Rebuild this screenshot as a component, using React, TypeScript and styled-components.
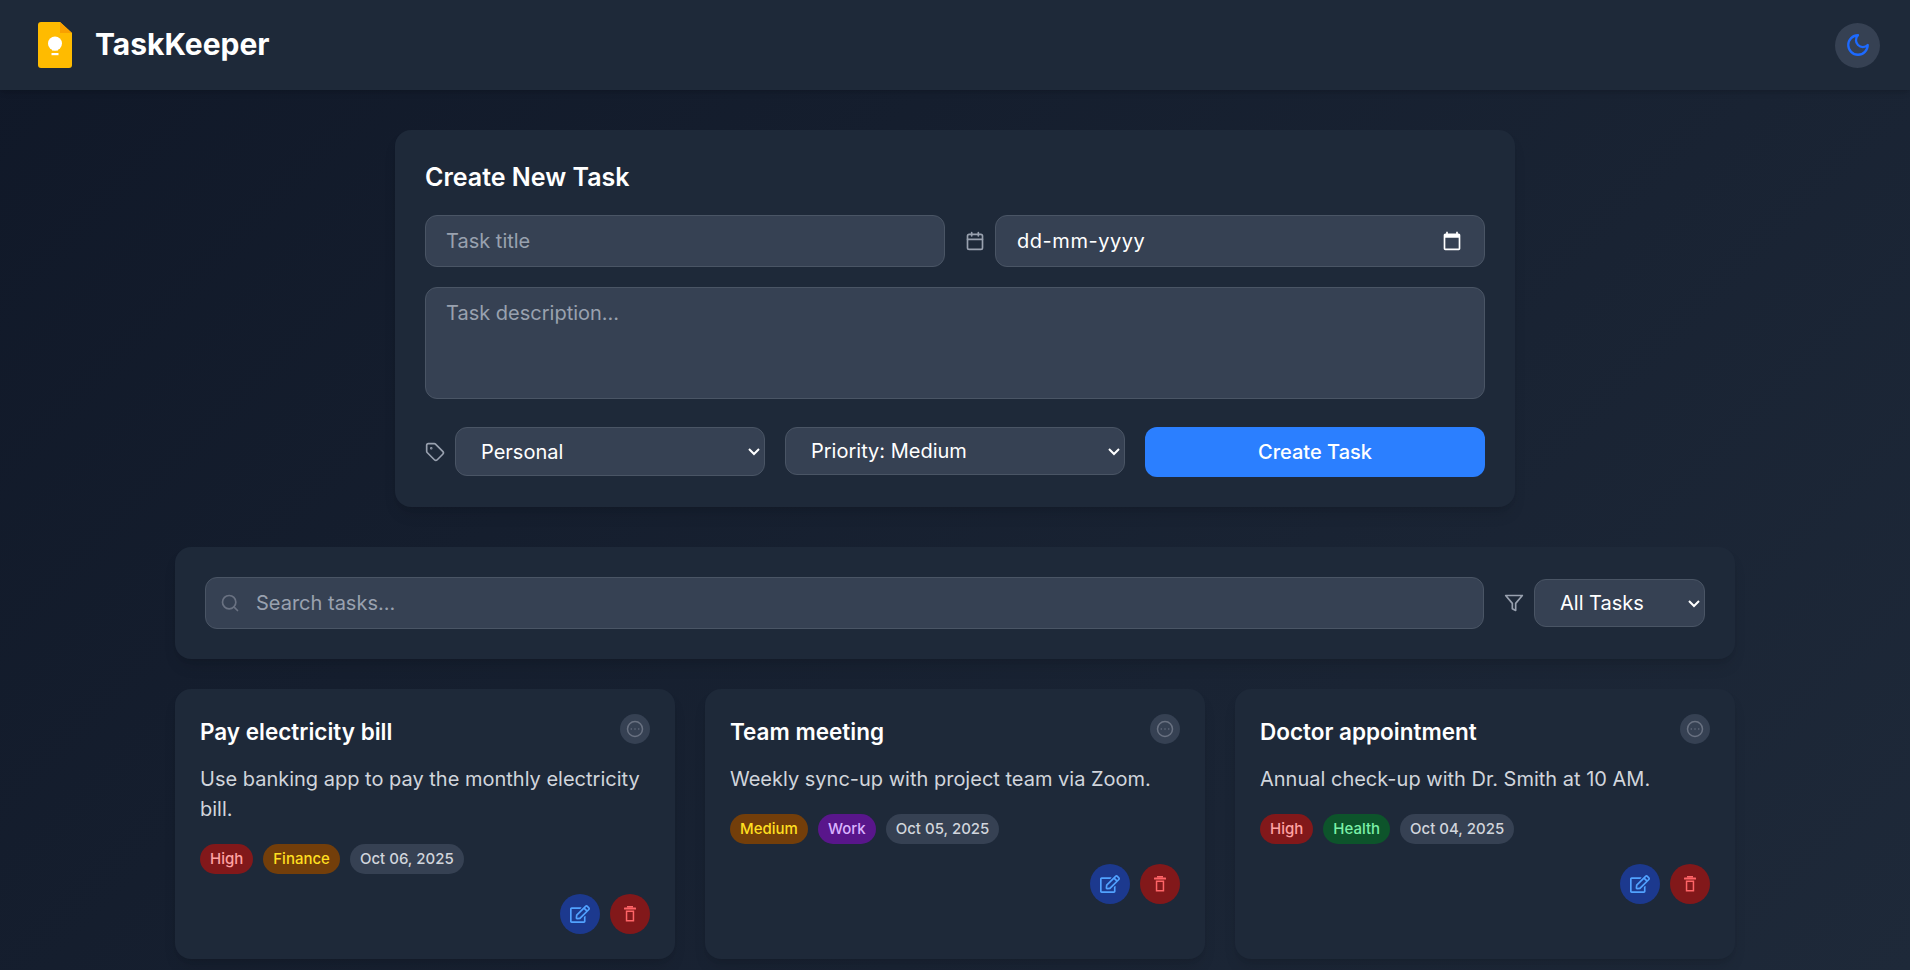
import React from "react";
import styled, { createGlobalStyle } from "styled-components";
import { Calendar, Tag, Search, CircleEllipsis } from "lucide-react";
import { FaRegEdit } from "react-icons/fa";

const Global = createGlobalStyle`
  * { box-sizing: border-box; }
  html, body { margin: 0; padding: 0; }
  body {
    min-height: 970px;
    background: linear-gradient(135deg, #101828 0%, #1e2939 100%);
    font-family: Inter, "Liberation Sans", sans-serif;
    color: #fff;
    overflow: hidden;
  }
`;

const Header = styled.header`
  height: 90px;
  padding: 0 30px 0 38px;
  display: flex;
  align-items: center;
  justify-content: space-between;
  background: #1e2939;
  box-shadow: 0 4px 6px -1px rgba(0, 0, 0, 0.1), 0 2px 4px -2px rgba(0, 0, 0, 0.1);
`;
const Brand = styled.div`
  display: flex;
  align-items: center;
  gap: 23px;
`;
const BrandName = styled.h1`
  margin: 0;
  padding-bottom: 2px;
  font-size: 30px;
  font-weight: 700;
  line-height: 36px;
`;
const ThemeButton = styled.button`
  width: 45px;
  height: 45px;
  border: 0;
  border-radius: 50%;
  background: #364153;
  color: #1d6aff;
  display: flex;
  align-items: center;
  justify-content: center;
  padding: 0;
`;
const Main = styled.main`
  width: 1560px;
  margin: 0 auto;
  padding-top: 40px;
`;
const Panel = styled.section`
  background: #1e2939;
  border-radius: 16px;
  padding: 30px;
  box-shadow: 0 10px 15px -3px rgba(0, 0, 0, 0.1), 0 4px 6px -4px rgba(0, 0, 0, 0.1);
`;
const FormPanel = styled(Panel)`
  width: 1120px;
  margin: 0 auto 40px;
  height: 377px;
`;
const FormTitle = styled.h2`
  margin: 0 0 20px;
  font-size: 25px;
  font-weight: 600;
  line-height: 35px;
`;
const TopRow = styled.div`
  display: grid;
  grid-template-columns: 1fr 1fr;
  gap: 20px;
  margin-bottom: 20px;
`;
const IconField = styled.div<{ $grow?: boolean }>`
  display: flex;
  align-items: center;
  gap: 10px;
  color: #99a1af;
  position: relative;
  flex: ${(p) => (p.$grow ? 1 : "none")};
`;
const fieldCss = `
  background: #364153;
  border: 1px solid #4a5565;
  border-radius: 12px;
  color: #fff;
  font-family: Inter, "Liberation Sans", sans-serif;
  font-size: 20px;
  outline: none;
  &::placeholder { color: #99a1af; opacity: 1; }
`;
const TextInput = styled.input`
  ${fieldCss}
  width: 100%;
  height: 52px;
  padding: 0 20px;
  min-width: 0;
`;
const DateInput = styled(TextInput)`
  flex: 1;
  padding: 0 21px;
  letter-spacing: 0.55px;
`;
const DateGlyph = styled.svg`
  position: absolute;
  right: 23px;
  top: 16px;
  width: 20px;
  height: 20px;
  fill: #fff;
`;
const TextArea = styled.textarea`
  ${fieldCss}
  display: block;
  width: 100%;
  height: 112px;
  padding: 13px 20px;
  resize: none;
  margin-bottom: 28px;
`;
const BottomRow = styled.div`
  display: grid;
  grid-template-columns: repeat(3, 1fr);
  gap: 20px;
  align-items: start;
`;
/* The native arrow scales only through zoom, so sizes below are in zoomed units. */
const Select = styled.select<{ $h?: number }>`
  ${fieldCss}
  zoom: 1.25;
  font-size: 16px;
  color-scheme: dark;
  flex: 1;
  width: 100%;
  min-width: 0;
  border-radius: 9.6px;
  height: ${(p) => (p.$h ?? 48) / 1.25}px;
  padding: 0 16px;
`;
const PrimaryButton = styled.button`
  height: 50px;
  background: #2b7fff;
  border: 0;
  border-radius: 12px;
  color: #fff;
  font-family: inherit;
  font-size: 20px;
  font-weight: 500;
`;
const FilterBar = styled(Panel)`
  display: flex;
  align-items: center;
  gap: 20px;
  margin-bottom: 30px;
`;
const SearchInput = styled(TextInput)`
  padding-left: 50px;
`;
const SearchGlyph = styled.span`
  position: absolute;
  left: 15px;
  top: 16px;
  height: 20px;
  color: #6a7282;
`;
const FilterSelect = styled(Select)`
  flex: none;
  width: 136.8px;
`;
const Grid = styled.div`
  display: grid;
  grid-template-columns: repeat(3, 1fr);
  gap: 30px;
`;
const Card = styled.article`
  position: relative;
  background: #1e2939;
  border-radius: 16px;
  padding: 25px;
  height: 270px;
  box-shadow: 0 10px 15px -3px rgba(0, 0, 0, 0.1), 0 4px 6px -4px rgba(0, 0, 0, 0.1);
`;
const CardTitle = styled.h3`
  margin: 0 0 14px;
  font-size: 22.5px;
  font-weight: 600;
  line-height: 36px;
`;
const MenuButton = styled.button`
  position: absolute;
  top: 25px;
  right: 25px;
  width: 30px;
  height: 30px;
  border: 0;
  padding: 0;
  border-radius: 50%;
  background: #364153;
  color: #6a7282;
  display: flex;
  align-items: center;
  justify-content: center;
`;
const Description = styled.p`
  margin: 0 0 20px;
  font-size: 20px;
  line-height: 30px;
  color: #d1d5dc;
`;
const TagRow = styled.div`
  display: flex;
  gap: 10px;
  margin-bottom: 20px;
`;
const Pill = styled.span<{ $bg: string; $fg: string }>`
  height: 30px;
  padding: 0 10px;
  border-radius: 15px;
  background: ${(p) => p.$bg};
  color: ${(p) => p.$fg};
  font-size: 15px;
  font-weight: 500;
  line-height: 30px;
`;
const Actions = styled.div`
  display: flex;
  justify-content: flex-end;
  gap: 10px;
`;
const ActionButton = styled.button<{ $bg: string; $fg: string }>`
  width: 40px;
  height: 40px;
  border: 0;
  padding: 0;
  border-radius: 50%;
  background: ${(p) => p.$bg};
  color: ${(p) => p.$fg};
  display: flex;
  align-items: center;
  justify-content: center;
`;

const Logo = () => (
  <svg width="34" height="46" viewBox="0 0 34 46">
    <path d="M3 0H22L34 11V43a3 3 0 0 1-3 3H3a3 3 0 0 1-3-3V3a3 3 0 0 1 3-3Z" fill="#ffbb00" />
    <path d="M22 0L34 11H22Z" fill="#f9a000" />
    <circle cx="17" cy="21.5" r="7" fill="#fff" />
    <rect x="14" y="26" width="6" height="2.5" fill="#fff" />
    <rect x="13.5" y="31" width="7" height="2.2" fill="#fff" />
  </svg>
);

const MoonIcon = () => (
  <svg width="26" height="26" viewBox="0 0 24 24" fill="none" stroke="currentColor" strokeWidth="2.1" strokeLinecap="round" strokeLinejoin="round">
    <path d="M12 3a6 6 0 0 0 9 9 9 9 0 1 1-9-9Z" />
  </svg>
);

const FilterIcon = () => (
  <svg width="20" height="20" viewBox="0 0 24 24" fill="none" stroke="currentColor" strokeWidth="2" strokeLinejoin="round" strokeLinecap="round">
    <polygon points="22 3 2 3 10 12.46 10 19 14 21 14 12.46 22 3" />
  </svg>
);

const TrashIcon = () => (
  <svg width="12" height="15.5" viewBox="0 0 12 15.5" fill="currentColor">
    <rect x="3" y="0" width="6" height="1.6" />
    <rect x="0" y="1.6" width="12" height="2" rx="0.4" />
    <path d="M1.8 4.6H10.2V15.5H1.8ZM3.3 6V14H8.7V6Z" fillRule="evenodd" />
  </svg>
);

const pills = {
  High: ["#82181a", "#ffa2a2"],
  Medium: ["#733e0a", "#ffdf20"],
  Finance: ["#733e0a", "#ffdf20"],
  Work: ["#59168b", "#dab2ff"],
  Health: ["#0d542b", "#7bf1a8"],
  Date: ["#364153", "#d1d5dc"],
} as const;

const tasks = [
  { title: "Pay electricity bill", text: "Use banking app to pay the monthly electricity bill.", p: "High", c: "Finance", d: "Oct 06, 2025" },
  { title: "Team meeting", text: "Weekly sync-up with project team via Zoom.", p: "Medium", c: "Work", d: "Oct 05, 2025" },
  { title: "Doctor appointment", text: "Annual check-up with Dr. Smith at 10 AM.", p: "High", c: "Health", d: "Oct 04, 2025" },
] as const;

export default function App() {
  return (
    <>
      <Global />
      <Header>
        <Brand>
          <Logo />
          <BrandName>TaskKeeper</BrandName>
        </Brand>
        <ThemeButton aria-label="Theme"><MoonIcon /></ThemeButton>
      </Header>
      <Main>
        <FormPanel>
          <FormTitle>Create New Task</FormTitle>
          <TopRow>
            <TextInput placeholder="Task title" />
            <IconField>
              <Calendar size={20} />
              <DateInput readOnly value="dd-mm-yyyy" />
              <DateGlyph viewBox="0 0 24 24">
                <path d="M20 3h-1V1h-2v2H7V1H5v2H4c-1.1 0-2 .9-2 2v16c0 1.1.9 2 2 2h16c1.1 0 2-.9 2-2V5c0-1.1-.9-2-2-2zm0 18H4V8h16v13z" />
              </DateGlyph>
            </IconField>
          </TopRow>
          <TextArea placeholder="Task description..." />
          <BottomRow>
            <IconField>
              <Tag size={20} />
              <Select $h={49} defaultValue="Personal"><option>Personal</option></Select>
            </IconField>
            <Select defaultValue="Priority: Medium"><option>Priority: Medium</option></Select>
            <PrimaryButton>Create Task</PrimaryButton>
          </BottomRow>
        </FormPanel>
        <FilterBar>
          <IconField $grow>
            <SearchGlyph><Search size={20} /></SearchGlyph>
            <SearchInput placeholder="Search tasks..." />
          </IconField>
          <IconField>
            <FilterIcon />
            <FilterSelect defaultValue="All Tasks"><option>All Tasks</option></FilterSelect>
          </IconField>
        </FilterBar>
        <Grid>
          {tasks.map((t) => (
            <Card key={t.title}>
              <CardTitle>{t.title}</CardTitle>
              <MenuButton aria-label="More"><CircleEllipsis size={18} /></MenuButton>
              <Description>{t.text}</Description>
              <TagRow>
                <Pill $bg={pills[t.p][0]} $fg={pills[t.p][1]}>{t.p}</Pill>
                <Pill $bg={pills[t.c][0]} $fg={pills[t.c][1]}>{t.c}</Pill>
                <Pill $bg={pills.Date[0]} $fg={pills.Date[1]}>{t.d}</Pill>
              </TagRow>
              <Actions>
                <ActionButton $bg="#1c398e" $fg="#51a2ff" aria-label="Edit"><FaRegEdit size={20} /></ActionButton>
                <ActionButton $bg="#82181a" $fg="#ff6467" aria-label="Delete"><TrashIcon /></ActionButton>
              </Actions>
            </Card>
          ))}
        </Grid>
      </Main>
    </>
  );
}
